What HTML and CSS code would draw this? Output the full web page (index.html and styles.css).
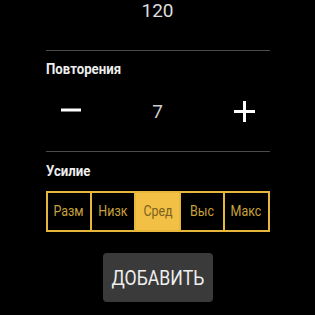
FILE: index.html
```html
<!DOCTYPE html>
<html lang="ru">
<head>
    <meta charset="UTF-8">
    <meta name="viewport" content="width=device-width, initial-scale=1.0">
    <title>Добавить подход</title>
    <link rel="stylesheet" href="styles.css">
</head>
<body>
    <div class="screen">
        <div class="weight">120</div>
        <div class="divider"></div>

        <div class="label"><span>Повторения</span></div>
        <div class="stepper">
            <button class="step step-minus" aria-label="Меньше">
                <svg width="20" height="20" viewBox="0 0 20 20"><rect x="0" y="8.5" width="20" height="3" fill="#fff"/></svg>
            </button>
            <div class="count">7</div>
            <button class="step" aria-label="Больше">
                <svg width="21" height="21" viewBox="0 0 21 21"><rect x="0" y="9" width="21" height="3" fill="#fff"/><rect x="9" y="0" width="3" height="21" fill="#fff"/></svg>
            </button>
        </div>
        <div class="divider"></div>

        <div class="label label-effort"><span>Усилие</span></div>
        <div class="segments">
            <div class="segment"><span>Разм</span></div>
            <div class="segment"><span>Низк</span></div>
            <div class="segment active"><span>Сред</span></div>
            <div class="segment"><span>Выс</span></div>
            <div class="segment"><span>Макс</span></div>
        </div>

        <button class="add"><span>ДОБАВИТЬ</span></button>
    </div>
</body>
</html>
```

FILE: styles.css
```css
body {
    margin: 0;
    background-color: #000;
    font-family: Roboto, "Noto Sans", sans-serif;
    color: #ddd;
    height: 315px;
    overflow: hidden;
}

.screen {
    width: 224px;
    margin: 0 auto;
    display: flex;
    flex-direction: column;
}

.weight {
    text-align: center;
    font-size: 19px;
    line-height: 22px;
    color: #ddd;
    margin-bottom: 28px;
}

.divider {
    height: 1px;
    background-color: #4a4a4a;
}

.label {
    margin-top: 9px;
    font-size: 15px;
    line-height: 18px;
    font-weight: bold;
    color: #eee;
}

.label span {
    display: inline-block;
    transform: scaleX(0.88);
    transform-origin: left center;
}

.label-effort {
    margin-top: 10px;
}

.stepper {
    display: flex;
    justify-content: space-between;
    align-items: center;
    height: 40px;
    margin-top: 13px;
    margin-bottom: 20px;
}

.step {
    width: 50px;
    height: 40px;
    background: none;
    border: none;
    padding: 0;
    display: flex;
    justify-content: center;
    align-items: center;
}

.step-minus {
    padding-bottom: 2px;
}

.count {
    font-size: 19px;
    color: #ccc;
}

.segments {
    display: flex;
    height: 37px;
    margin-top: 11px;
    border: 2px solid #e7b73c;
}

.segment {
    flex: 1;
    display: flex;
    justify-content: center;
    align-items: center;
    font-size: 14.5px;
    color: #c9a23c;
    border-left: 2px solid #e7b73c;
}

.segment:first-child {
    border-left: none;
}

.segment span {
    display: inline-block;
    transform: scaleX(0.86);
}

.segment.active {
    background-color: #f2c045;
    color: #7d6120;
}

.add {
    align-self: center;
    margin-top: 21px;
    width: 110px;
    height: 49px;
    background-color: #3a3a3a;
    border: none;
    border-radius: 4px;
    color: #eee;
    font-family: Roboto, "Noto Sans", sans-serif;
    font-size: 20.5px;
    padding: 0;
}

.add span {
    display: inline-block;
    transform: scaleX(0.86);
}
```
